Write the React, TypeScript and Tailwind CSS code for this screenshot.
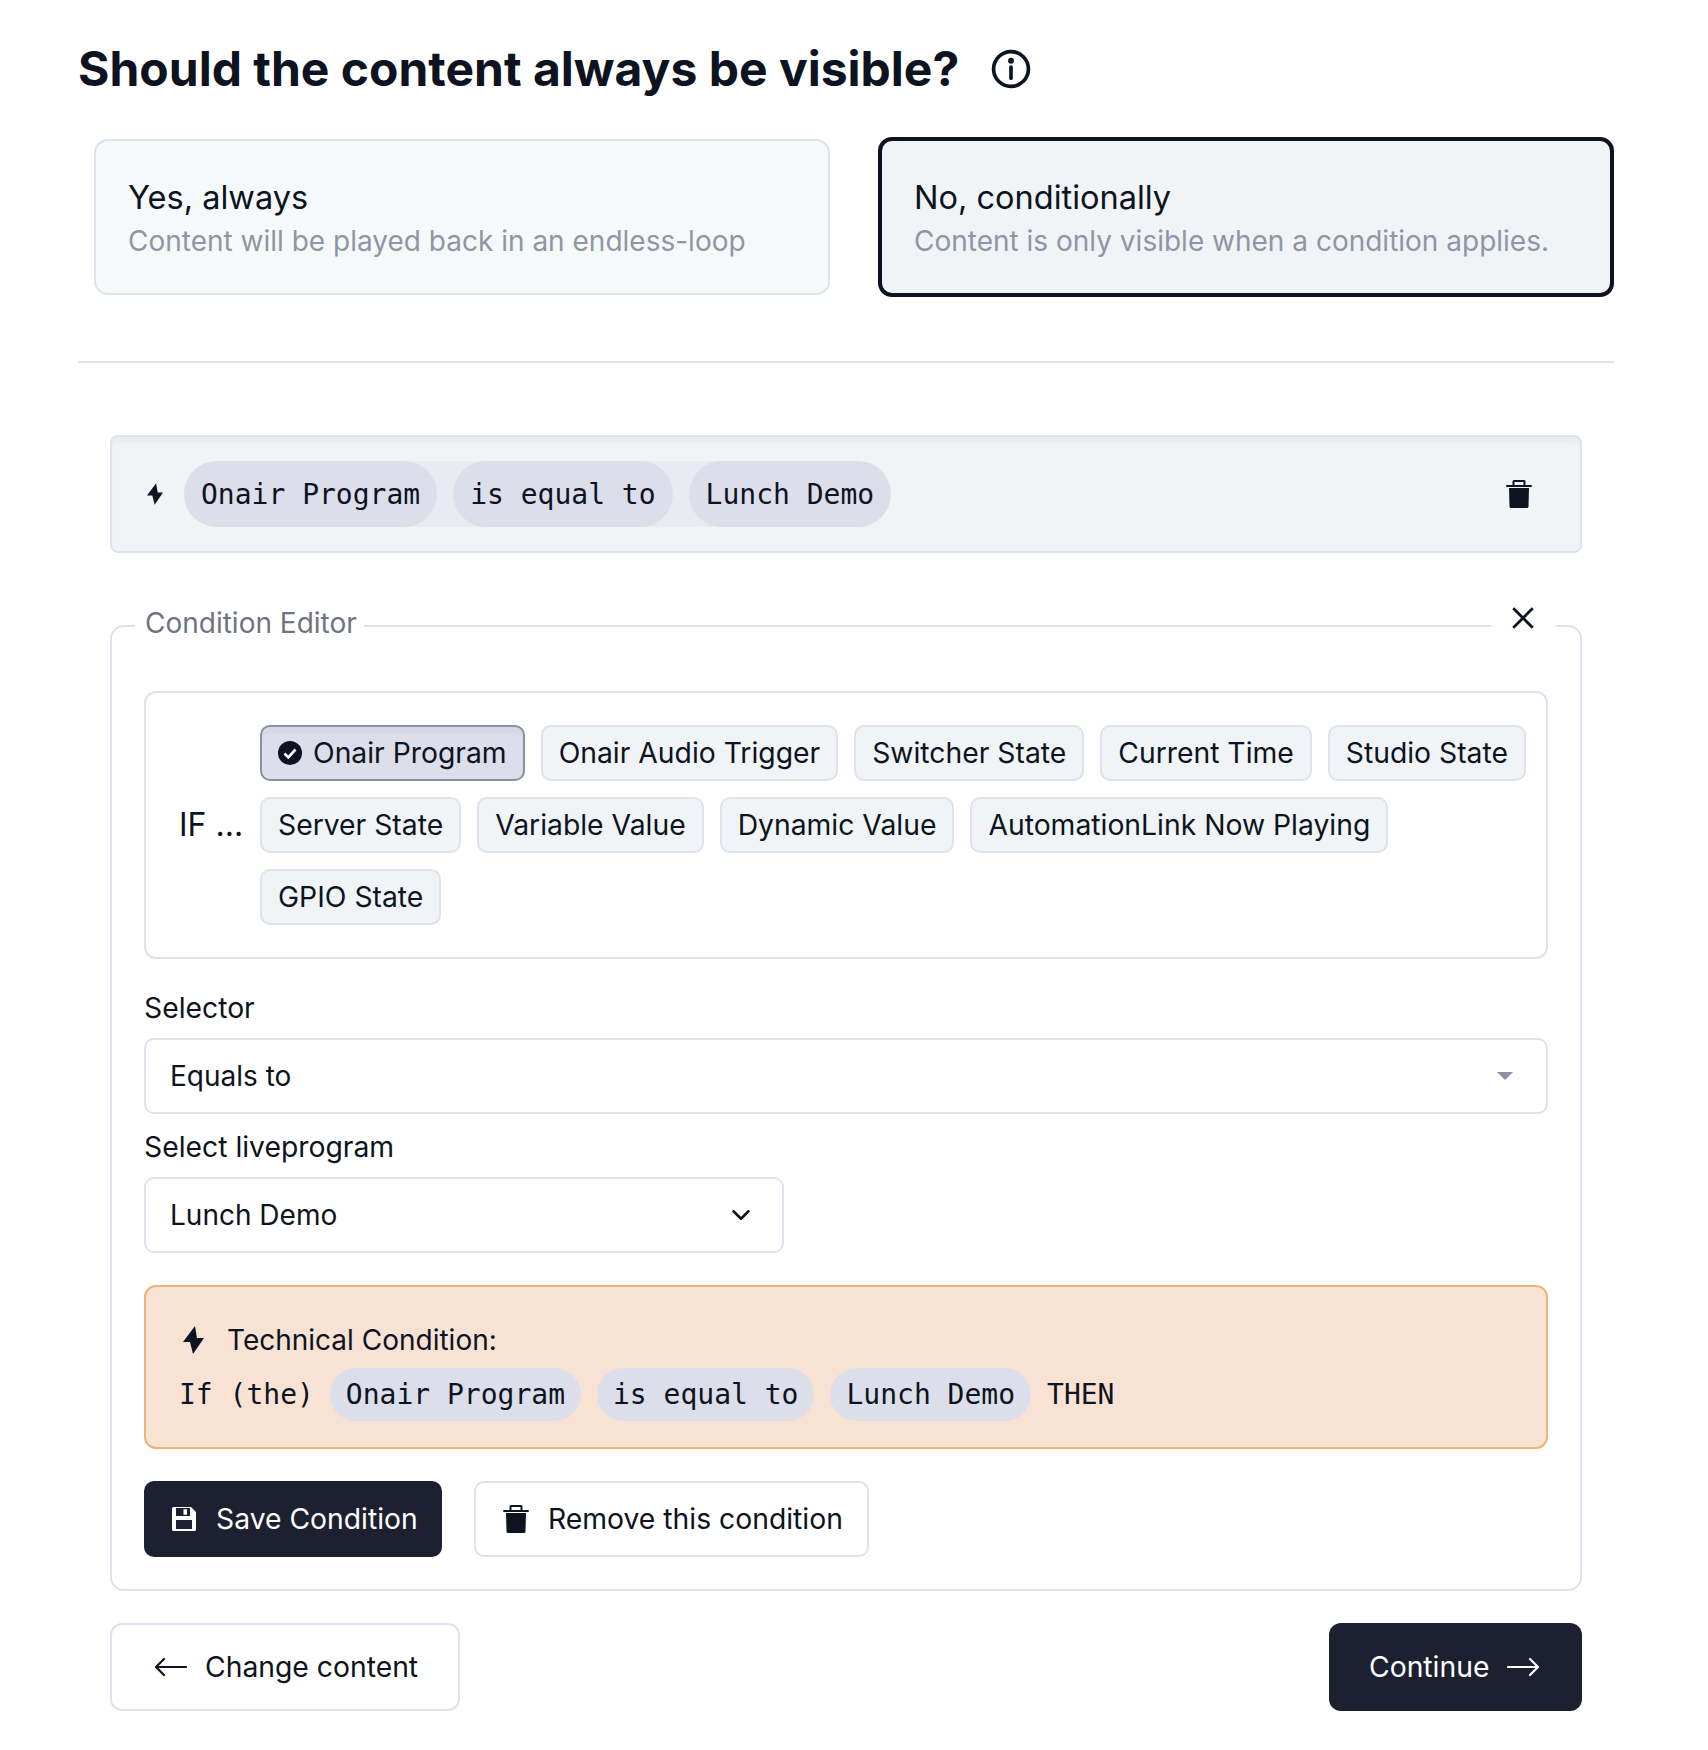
import React from "react";
import { ChevronDown } from "lucide-react";

const Bolt = ({ className }: { className: string }) => (
  <svg className={className} viewBox="0 0 21 28" fill="currentColor">
    <path d="M12 0 0 16h7l3 12 11-16h-7z" />
  </svg>
);

const Trash = ({ className }: { className: string }) => (
  <svg className={className} viewBox="0 0 26 28" fill="currentColor">
    <path fillRule="evenodd" d="M8 0h10a1.500 1.500 0 0 1 1.500 1.500V5H25a1 1 0 0 1 0 2H1a1 1 0 0 1 0-2h5.500V1.500A1.500 1.500 0 0 1 8 0zm.500 2v3h9V2z" />
    <path d="M3 8h20l-.500 18.500a1.500 1.500 0 0 1-1.500 1.500H5a1.500 1.500 0 0 1-1.500-1.500z" />
  </svg>
);

const ArrowLong = ({ className, flip }: { className: string; flip?: boolean }) => (
  <svg className={`${className} ${flip ? "rotate-180" : ""}`} viewBox="0 0 32 20" fill="none" stroke="currentColor" strokeWidth="2.200" strokeLinecap="round" strokeLinejoin="round">
    <path d="M1 10h30M23 2l8 8-8 8" />
  </svg>
);

const pillGroup = ["Onair Program", "is equal to", "Lunch Demo"];

const row = [
  "Onair Audio Trigger",
  "Switcher State",
  "Current Time",
  "Studio State",
  "Server State",
  "Variable Value",
  "Dynamic Value",
  "AutomationLink Now Playing",
  "GPIO State",
];

const Mono = "[font-family:'DejaVu_Sans_Mono',monospace]";

export default function App() {
  return (
    <div className="w-[1708px] h-[1750px] bg-white text-[#0d1320] [font-family:Inter,sans-serif] text-[28px] leading-[36px] overflow-hidden">
      <div className="pl-[78px] pr-[94px] pt-[40px]">
        <div className="flex items-center h-[58px]">
          <h1 className="text-[48px] leading-[58px] font-bold">Should the content always be visible?</h1>
          <svg className="ml-[30px] w-[44px] h-[44px]" viewBox="0 0 24 24" fill="none" stroke="currentColor" strokeWidth="2" strokeLinecap="round">
            <circle cx="12" cy="12" r="9.500" />
            <path d="M12 11v6" />
            <circle cx="12" cy="7.500" r="0.600" fill="currentColor" />
          </svg>
        </div>

        <div className="grid grid-cols-2 gap-[48px] mt-[39px] pl-[16px]">
          <div className="h-[156px] my-[2px] rounded-[14px] border-2 border-[#dfe2ec] bg-[#f6f9fa] px-[32px] pt-[36px]">
            <div className="text-[32.500px] leading-[42px]">Yes, always</div>
            <div className="text-[#9095a5] mt-[4px]">Content will be played back in an endless-loop</div>
          </div>
          <div className="h-[160px] rounded-[14px] border-4 border-[#0d1320] bg-[#f0f4f7] px-[32px] pt-[36px]">
            <div className="text-[32.500px] leading-[42px]">No, conditionally</div>
            <div className="text-[#9095a5] mt-[4px]">Content is only visible when a condition applies.</div>
          </div>
        </div>

        <div className="border-t-2 border-[#dfe2ec] mt-[64px]" />

        <div className="mx-[32px]">
          <div className="mt-[72px] h-[118px] rounded-[8px] border-2 border-[#dfe2ec] bg-[#f0f4f7] shadow-[inset_0_6px_3px_rgba(0,0,0,0.025)] flex items-center pl-[35px] pr-[48px]">
            <Bolt className="w-[16px] h-[22px] mr-[21px]" />
            <div className={`flex gap-[16px] rounded-full bg-[#e8ebf1] ${Mono}`}>
              {pillGroup.map((p) => (
                <span key={p} className="h-[66px] flex items-center px-[17px] pt-[1px] rounded-full bg-[#dcdfe9]">{p}</span>
              ))}
            </div>
            <Trash className="ml-auto w-[26px] h-[28px]" />
          </div>

          <fieldset className="relative mt-[52px] h-[986px] rounded-[14px] border-2 border-[#dfe2ec] px-[32px] pt-[44px]">
            <legend className="ml-[-9px] pl-[10px] pr-[7px] pb-[6px] text-[#6f7482] leading-[36px]">Condition Editor</legend>
            <button className="absolute right-[25px] top-[-47px] w-[64px] h-[36px] bg-white flex items-center justify-center">
              <svg className="w-[26px] h-[26px]" viewBox="0 0 24 24" fill="none" stroke="currentColor" strokeWidth="2.600"><path d="M3 3l18 18M21 3 3 21" /></svg>
            </button>

            <div className="h-[268px] rounded-[12px] border-2 border-[#dfe2ec] flex items-center pl-[33px] pr-[8px]">
              <div className="w-[81px] shrink-0 text-[32px]">IF ...</div>
              <div className="flex flex-wrap gap-x-[16px] gap-y-[16px] text-[28.300px]">
                <span className="h-[56px] flex items-center gap-[11px] px-[16px] rounded-[10px] border-2 border-[#8b8f9e] bg-[#dcdfe9] shadow-[inset_0_6px_3px_rgba(0,0,0,0.03)]">
                  <svg className="w-[24px] h-[24px]" viewBox="0 0 24 24">
                    <circle cx="12" cy="12" r="12" fill="#0d1320" />
                    <path d="M6.500 12.500l3.800 3.800 7.200-7.800" fill="none" stroke="#fff" strokeWidth="2.600" />
                  </svg>
                  Onair Program
                </span>
                {row.map((c) => (
                  <span key={c} className="h-[56px] flex items-center px-[16px] rounded-[10px] border-2 border-[#dfe2ec] bg-[#f0f4f7]">{c}</span>
                ))}
              </div>
            </div>

            <div className="mt-[31px] text-[28.300px]">Selector</div>
            <div className="mt-[12px] h-[76px] rounded-[10px] border-2 border-[#dfe2ec] flex items-center pl-[24px] pr-[33px]">
              Equals to
              <span className="ml-auto w-0 h-0 border-x-[8px] border-x-transparent border-t-[8px] border-t-[#8b8f9e]" />
            </div>

            <div className="mt-[15px] text-[28.300px]">Select liveprogram</div>
            <div className="mt-[12px] w-[640px] h-[76px] rounded-[10px] border-2 border-[#dfe2ec] flex items-center pl-[24px] pr-[26px]">
              Lunch Demo
              <ChevronDown className="ml-auto w-[30px] h-[30px]" strokeWidth={2} />
            </div>

            <div className="mt-[32px] h-[164px] rounded-[12px] border-2 border-[#ecb573] bg-[#f8e2d4] pl-[33px] pt-[35px]">
              <div className="flex items-center">
                <Bolt className="w-[21px] h-[28px] ml-[4px] mr-[23px]" />
                Technical Condition:
              </div>
              <div className={`flex items-center gap-[16px] mt-[10px] ${Mono}`}>
                If (the)
                {pillGroup.map((p) => (
                  <span key={p} className="h-[53px] flex items-center px-[16px] pt-[1px] rounded-full bg-[#dcdfe9]">{p}</span>
                ))}
                THEN
              </div>
            </div>

            <div className="flex gap-[32px] mt-[32px] text-[28.300px]">
              <button className="h-[76px] w-[298px] rounded-[10px] bg-[#1c2030] text-white flex items-center pl-[28px] gap-[20px]">
                <svg className="w-[24px] h-[24px]" viewBox="0 0 24 24" fill="currentColor">
                  <path fillRule="evenodd" d="M1.500 0H19l5 5v17.500a1.500 1.500 0 0 1-1.500 1.500h-21A1.500 1.500 0 0 1 0 22.500v-21A1.500 1.500 0 0 1 1.500 0zM4 1v8h14V1zm7.500 1.200h3.500v5.600h-3.500zM4 13v9h16v-9z" />
                </svg>
                Save Condition
              </button>
              <button className="h-[76px] w-[395px] rounded-[10px] border-2 border-[#dfe2ec] flex items-center pl-[27px] gap-[19px]">
                <Trash className="w-[26px] h-[28px]" />
                Remove this condition
              </button>
            </div>
          </fieldset>

          <div className="flex justify-between mt-[32px] text-[28.300px]">
            <button className="h-[88px] w-[350px] rounded-[12px] border-2 border-[#dfe2ec] flex items-center pl-[43px] gap-[18px]">
              <ArrowLong className="w-[32px] h-[20px]" flip />
              Change content
            </button>
            <button className="h-[88px] w-[253px] rounded-[12px] bg-[#1c2030] text-white flex items-center pl-[40px] gap-[18px]">
              Continue
              <ArrowLong className="w-[32px] h-[20px]" />
            </button>
          </div>
        </div>
      </div>
    </div>
  );
}
